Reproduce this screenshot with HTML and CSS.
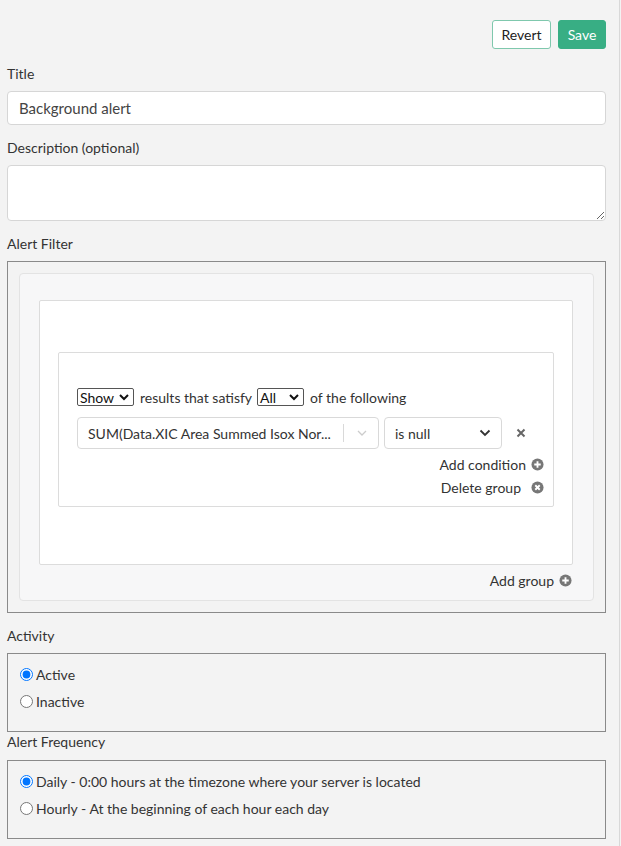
FILE: index.html
```html
<!DOCTYPE html>
<html lang="en">
<head>
    <meta charset="UTF-8">
    <meta name="viewport" content="width=device-width, initial-scale=1.0">
    <title>Alert Settings</title>
    <link rel="stylesheet" href="styles.css">
</head>
<body>
    <div class="panel">
        <!-- Top actions -->
        <div class="actions">
            <button class="btn btn-outline">Revert</button>
            <button class="btn btn-primary">Save</button>
        </div>

        <label class="field-label first">Title</label>
        <input class="text-input" type="text" value="Background alert">

        <label class="field-label">Description (optional)</label>
        <textarea class="text-area"></textarea>

        <label class="field-label">Alert Filter</label>
        <div class="box filter-box">
            <div class="builder">
                <div class="group outer-group">
                    <div class="group inner-group">
                        <div class="rule-head">
                            <span class="mini-select show-select">Show
                                <svg width="12" height="8" viewBox="0 0 12 8"><path d="M2 2l4 4 4-4" fill="none" stroke="#111" stroke-width="2"/></svg>
                            </span>
                            <span>results that satisfy</span>
                            <span class="mini-select all-select">All
                                <svg width="12" height="8" viewBox="0 0 12 8"><path d="M2 2l4 4 4-4" fill="none" stroke="#111" stroke-width="2"/></svg>
                            </span>
                            <span>of the following</span>
                        </div>
                        <div class="rule-row">
                            <div class="combo field-combo">
                                <span class="combo-text">SUM(Data.XIC Area Summed Isox Nor...</span>
                                <span class="combo-sep"></span>
                                <svg width="12" height="8" viewBox="0 0 12 8"><path d="M2 2l4 4 4-4" fill="none" stroke="#ccc" stroke-width="1.3"/></svg>
                            </div>
                            <div class="combo op-combo">
                                <span class="combo-text">is null</span>
                                <svg width="12" height="8" viewBox="0 0 12 8"><path d="M1.5 1.5l4.5 4.5 4.5-4.5" fill="none" stroke="#333" stroke-width="1.8"/></svg>
                            </div>
                            <svg class="remove" width="10" height="10" viewBox="0 0 10 10"><path d="M1.5 1.5l7 7M8.5 1.5l-7 7" stroke="#666" stroke-width="2"/></svg>
                        </div>
                        <div class="link-row add-condition">Add condition
                            <svg width="13" height="13" viewBox="0 0 14 14"><circle cx="7" cy="7" r="6.5" fill="#777"/><path d="M7 3.5v7M3.5 7h7" stroke="#fff" stroke-width="2"/></svg>
                        </div>
                        <div class="link-row delete-group">Delete group
                            <svg width="13" height="13" viewBox="0 0 14 14"><circle cx="7" cy="7" r="6.5" fill="#777"/><path d="M4.6 4.6l4.8 4.8M9.4 4.6l-4.8 4.8" stroke="#fff" stroke-width="2"/></svg>
                        </div>
                    </div>
                </div>
                <div class="link-row add-group">Add group
                    <svg width="13" height="13" viewBox="0 0 14 14"><circle cx="7" cy="7" r="6.5" fill="#777"/><path d="M7 3.5v7M3.5 7h7" stroke="#fff" stroke-width="2"/></svg>
                </div>
            </div>
        </div>

        <label class="field-label">Activity</label>
        <div class="box radio-box">
            <label class="radio"><input type="radio" name="activity" checked> Active</label>
            <label class="radio"><input type="radio" name="activity"> Inactive</label>
        </div>

        <label class="field-label tight">Alert Frequency</label>
        <div class="box radio-box">
            <label class="radio"><input type="radio" name="freq" checked> Daily - 0:00 hours at the timezone where your server is located</label>
            <label class="radio"><input type="radio" name="freq"> Hourly - At the beginning of each hour each day</label>
        </div>
    </div>
</body>
</html>
```

FILE: styles.css
```css
/* Alert settings form */
body {
    margin: 0;
    background-color: #f3f3f3;
    font-family: 'Lato', 'Liberation Sans', sans-serif;
    font-size: 14px;
    line-height: 17px;
    color: #333;
}

.panel {
    width: 599px;
    padding: 0 13px 20px 7px;
    border-right: 1px solid #d8d8d8;
}

.actions {
    display: flex;
    justify-content: flex-end;
    gap: 7px;
    padding-top: 20px;
}

.btn {
    height: 29px;
    padding: 0 8px;
    font-family: inherit;
    font-size: 14px;
    border-radius: 3px;
    cursor: pointer;
}

.btn-outline {
    background-color: #fff;
    border: 1px solid #7fc8ad;
    color: #222;
    width: 59px;
}

.btn-primary {
    background-color: #38ae84;
    border: 1px solid #38ae84;
    color: #fff;
    width: 48px;
}

.field-label {
    display: block;
    margin: 14px 0 9px;
    color: #333;
}

.field-label.first {
    margin-top: 16px;
}

.field-label.tight {
    margin: 1px 0 10px;
}

.text-input {
    display: block;
    box-sizing: border-box;
    width: 100%;
    height: 34px;
    padding: 0 11px;
    border: 1px solid #d6d6d6;
    border-radius: 4px;
    background-color: #fff;
    font-family: inherit;
    font-size: 15px;
    color: #444;
}

.text-area {
    display: block;
    box-sizing: border-box;
    width: 100%;
    height: 56px;
    border: 1px solid #d6d6d6;
    border-radius: 4px;
    background-color: #fff;
}

.box {
    border: 1px solid #8a8a8a;
    box-sizing: border-box;
}

.filter-box {
    padding: 11px;
}

.builder {
    background-color: #f7f7f8;
    border: 1px solid #e3e3e3;
    border-radius: 4px;
    padding: 26px 20px 11px 19px;
}

.group {
    background-color: #fff;
    border: 1px solid #dcdcdc;
    border-radius: 2px;
}

.outer-group {
    padding: 51px 18px 57px 18px;
}

.inner-group {
    padding: 35px 9px 10px 18px;
}

.rule-head {
    display: flex;
    align-items: center;
    gap: 6px;
    color: #333;
}

.mini-select {
    display: inline-flex;
    align-items: center;
    justify-content: space-between;
    box-sizing: border-box;
    height: 18px;
    padding: 0 3px 0 2px;
    border: 1px solid #555;
    border-radius: 2px;
    color: #111;
}

.show-select {
    width: 57px;
}

.all-select {
    width: 47px;
    margin-left: -1px;
}

.rule-row {
    display: flex;
    align-items: center;
    margin-top: 11px;
}

.combo {
    display: flex;
    align-items: center;
    box-sizing: border-box;
    height: 32px;
    border: 1px solid #d9d9d9;
    border-radius: 4px;
    background-color: #fff;
    padding: 0 10px;
}

.field-combo {
    width: 302px;
}

.field-combo .combo-text {
    flex: 1;
    white-space: nowrap;
    color: #333;
}

.combo-sep {
    width: 1px;
    height: 18px;
    background-color: #d9d9d9;
    margin-right: 12px;
}

.op-combo {
    width: 118px;
    margin-left: 5px;
    justify-content: space-between;
}

.remove {
    margin-left: 14px;
}

.link-row {
    display: flex;
    justify-content: flex-end;
    align-items: center;
    gap: 5px;
    color: #333;
}

.add-condition {
    margin-top: 7px;
}

.delete-group {
    margin-top: 6px;
    gap: 10px;
}

.add-group {
    margin-top: 7px;
    gap: 5px;
    padding-right: 1px;
}

.radio-box {
    padding: 7px 12px 16px;
}

.radio {
    display: flex;
    align-items: center;
    height: 27px;
}

.radio input {
    margin: 0 3px 0 0;
    width: 13px;
    height: 13px;
}
```
